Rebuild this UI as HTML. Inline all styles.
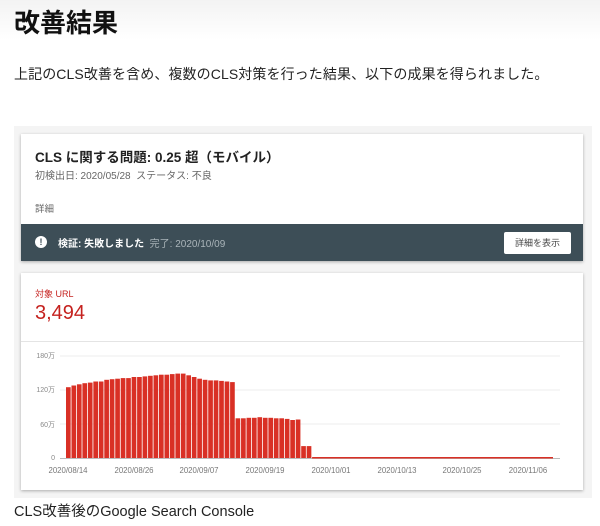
<!DOCTYPE html>
<html><head><meta charset="utf-8"><style>
*{margin:0;padding:0;box-sizing:border-box}
body{width:600px;height:526px;background:#fff;font-family:"Liberation Sans","Noto Sans CJK JP",sans-serif;color:#222;position:relative;overflow:hidden}
.a{position:absolute}
h1{position:absolute;left:14px;top:3px;font-size:26px;font-weight:bold;color:#111}
.p{left:14px;top:64px;font-size:14px;color:#222;white-space:nowrap;letter-spacing:0.1px}
.bg{left:14px;top:126px;width:578px;height:372px;background:#f4f4f4}
.card{background:#fff;box-shadow:0 1px 3px rgba(0,0,0,.3)}
</style></head><body>
<div class="a" style="left:0;top:0;width:600px;height:40px;background:linear-gradient(#f3f3f3,#fff)"></div>
<h1>改善結果</h1>
<div class="a p">上記のCLS改善を含め、複数のCLS対策を行った結果、以下の成果を得られました。</div>
<div class="a bg"></div>
<div class="a card" style="left:21px;top:134px;width:562px;height:127px">
 <div class="a" style="left:14px;top:12px;font-size:13.5px;font-weight:bold;color:#222">CLS に関する問題: 0.25 超（モバイル）</div>
 <div class="a" style="left:14px;top:33px;font-size:10px;color:#666">初検出日: 2020/05/28&nbsp;&nbsp;ステータス: 不良</div>
 <div class="a" style="left:14px;top:67px;font-size:9.5px;color:#666">詳細</div>
 <div class="a" style="left:0;top:90px;width:562px;height:37px;background:#3d4e57">
  <div class="a" style="left:14px;top:12px;width:12px;height:12px;border-radius:50%;background:#fff;color:#3d4e57;font-size:9px;font-weight:bold;text-align:center;line-height:12px">!</div>
  <div class="a" style="left:37px;top:11px;font-size:10px;color:#fff;font-weight:bold">検証: 失敗しました <span style="font-weight:normal;color:#aab4b9">&nbsp;完了: 2020/10/09</span></div>
  <div class="a" style="left:483px;top:8px;width:67px;height:22px;background:#fff;border-radius:2px;font-size:9px;color:#444;text-align:center;line-height:22px">詳細を表示</div>
 </div>
</div>
<div class="a card" style="left:21px;top:273px;width:562px;height:217px">
 <div class="a" style="left:14px;top:14px;font-size:9px;color:#c5221f">対象 URL</div>
 <div class="a" style="left:14px;top:29px;font-size:20px;color:#c5221f">3,494</div>
 <div class="a" style="left:0;top:68px;width:562px;height:1px;background:#e4e4e4"></div>
</div>
<svg class="a" style="left:0;top:0" width="600" height="526" id="ch">
<g font-size="7" fill="#888" font-family="Liberation Sans,Noto Sans CJK JP,sans-serif">
<text x="55" y="358" text-anchor="end">180万</text>
<text x="55" y="392" text-anchor="end">120万</text>
<text x="55" y="427" text-anchor="end">60万</text>
<text x="55" y="460" text-anchor="end">0</text>
</g>
<g stroke="#eee" stroke-width="1"><line x1="60" y1="356" x2="560" y2="356"/><line x1="60" y1="390" x2="560" y2="390"/><line x1="60" y1="424" x2="560" y2="424"/></g>
<line x1="60" y1="458.5" x2="560" y2="458.5" stroke="#bbb"/>
<g id="bars" fill="#d93025"></g>
<g font-size="7.8" fill="#777" text-anchor="middle" font-family="Liberation Sans,sans-serif">
<text x="68" y="473">2020/08/14</text><text x="134" y="473">2020/08/26</text><text x="199" y="473">2020/09/07</text><text x="265" y="473">2020/09/19</text><text x="331" y="473">2020/10/01</text><text x="397" y="473">2020/10/13</text><text x="462" y="473">2020/10/25</text><text x="528" y="473">2020/11/06</text>
</g>
</svg>
<div class="a" style="left:14px;top:500px;font-size:14.5px;color:#222">CLS改善後のGoogle Search Console</div>
<script>
var v=[125,128,130,132,133,135,135,138,139,140,141,141,143,143,144,145,146,147,147,148,149,149,146,143,140,138,137,137,136,135,134,
70,70,71,71,72,71,71,70,70,69,67,68, 21,21];
var g=document.getElementById('bars'),s='',x=66,p=5.47;
for(var i=0;i<v.length;i++){var h=v[i]*102/180;s+='<rect x="'+(x+i*p).toFixed(2)+'" y="'+(458-h).toFixed(1)+'" width="'+(p-0.8).toFixed(2)+'" height="'+h.toFixed(1)+'"/>';}
var xe=x+v.length*p;
s+='<rect x="'+xe.toFixed(1)+'" y="457" width="'+(553-xe).toFixed(1)+'" height="1.5"/>';
g.innerHTML=s;
</script>
</body></html>
